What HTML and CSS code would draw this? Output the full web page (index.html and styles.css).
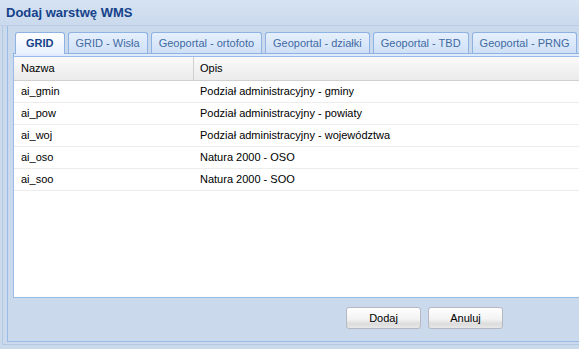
FILE: index.html
```html
<!DOCTYPE html>
<html lang="pl">
<head>
  <meta charset="UTF-8" />
  <title>Dodaj warstwę WMS</title>
  <link rel="stylesheet" href="styles.css">
</head>
<body>
  <div class="win-header">Dodaj warstwę WMS</div>
  <div class="window">
    <div class="win-frame">
      <div class="tabs">
        <div class="tab active">GRID</div>
        <div class="tab">GRID - Wisła</div>
        <div class="tab">Geoportal - ortofoto</div>
        <div class="tab">Geoportal - działki</div>
        <div class="tab">Geoportal - TBD</div>
        <div class="tab">Geoportal - PRNG</div>
      </div>
      <div class="tab-strip-bottom"></div>
      <div class="grid">
        <div class="grid-row grid-head">
          <div class="col-name">Nazwa</div>
          <div class="col-desc">Opis</div>
        </div>
        <div class="grid-row">
          <div class="col-name">ai_gmin</div>
          <div class="col-desc">Podział administracyjny - gminy</div>
        </div>
        <div class="grid-row">
          <div class="col-name">ai_pow</div>
          <div class="col-desc">Podział administracyjny - powiaty</div>
        </div>
        <div class="grid-row">
          <div class="col-name">ai_woj</div>
          <div class="col-desc">Podział administracyjny - województwa</div>
        </div>
        <div class="grid-row">
          <div class="col-name">ai_oso</div>
          <div class="col-desc">Natura 2000 - OSO</div>
        </div>
        <div class="grid-row">
          <div class="col-name">ai_soo</div>
          <div class="col-desc">Natura 2000 - SOO</div>
        </div>
      </div>
      <div class="footer">
        <button class="btn">Dodaj</button>
        <button class="btn">Anuluj</button>
      </div>
    </div>
  </div>
</body>
</html>
```

FILE: styles.css
```css
body {
  margin: 0;
  width: 579px;
  height: 349px;
  overflow: hidden;
  background: #cbd9ec;
  font-family: 'Liberation Sans', Arial, sans-serif;
  font-size: 11px;
  color: #000;
}
.win-header {
  width: 620px;
  height: 26px;
  line-height: 26px;
  padding-left: 6px;
  font-size: 13px;
  font-weight: bold;
  color: #15428b;
  background: linear-gradient(to bottom, #d6e3f2, #cad9ed);
  border-bottom: 1px solid #bccde4;
  box-sizing: border-box;
}
.window {
  width: 620px;
  margin-left: 2px;
  padding-left: 4px;
  border-left: 1px solid #b4c8e0;
  border-bottom: 1px solid #b4c8e0;
  padding-bottom: 2px;
}
.win-frame {
  border-left: 1px solid #99bbe8;
  border-bottom: 1px solid #99bbe8;
  padding: 6px 0 0 5px;
}
.tabs {
  display: flex;
  gap: 3px;
  padding-left: 2px;
  height: 21px;
  align-items: flex-end;
}
.tab {
  height: 20px;
  line-height: 20px;
  padding: 0 7px;
  color: #416aa3;
  background: linear-gradient(to bottom, #e6f0fd, #cfe0f6);
  border: 1px solid #8db2e3;
  border-bottom: none;
  border-radius: 3px 3px 0 0;
  white-space: nowrap;
}
.tab.active {
  height: 21px;
  padding: 0 10px;
  font-weight: bold;
  color: #15428b;
  background: linear-gradient(to bottom, #ffffff, #e8f1fd);
  position: relative;
  top: 1px;
}
.tab-strip-bottom {
  height: 2px;
  background: #deecfd;
  border-top: 1px solid #8db2e3;
  border-left: 1px solid #8db2e3;
}
.grid {
  height: 240px;
  background: #fff;
  border: 1px solid #99bbe8;
  border-right: none;
}
.grid-row {
  display: flex;
  height: 21px;
  line-height: 21px;
  border-bottom: 1px solid #ededed;
}
.grid-head {
  height: 23px;
  line-height: 23px;
  background: linear-gradient(to bottom, #fafafa, #ebebeb);
  border-bottom: 1px solid #d0d0d0;
}
.col-name {
  width: 180px;
  padding-left: 7px;
  box-sizing: border-box;
}
.col-desc {
  padding-left: 6px;
}
.grid-head .col-name {
  border-right: 1px solid #d0d0d0;
}
.footer {
  display: flex;
  gap: 7px;
  padding: 9px 0 12px 333px;
}
.btn {
  width: 75px;
  height: 22px;
  padding: 0;
  font-family: inherit;
  font-size: 11px;
  color: #000;
  background: linear-gradient(to bottom, #ffffff 0%, #f3f3f3 55%, #dcdcdc 80%, #e8e8e8 100%);
  border: 1px solid #b5b8c0;
  border-radius: 3px;
}
```
